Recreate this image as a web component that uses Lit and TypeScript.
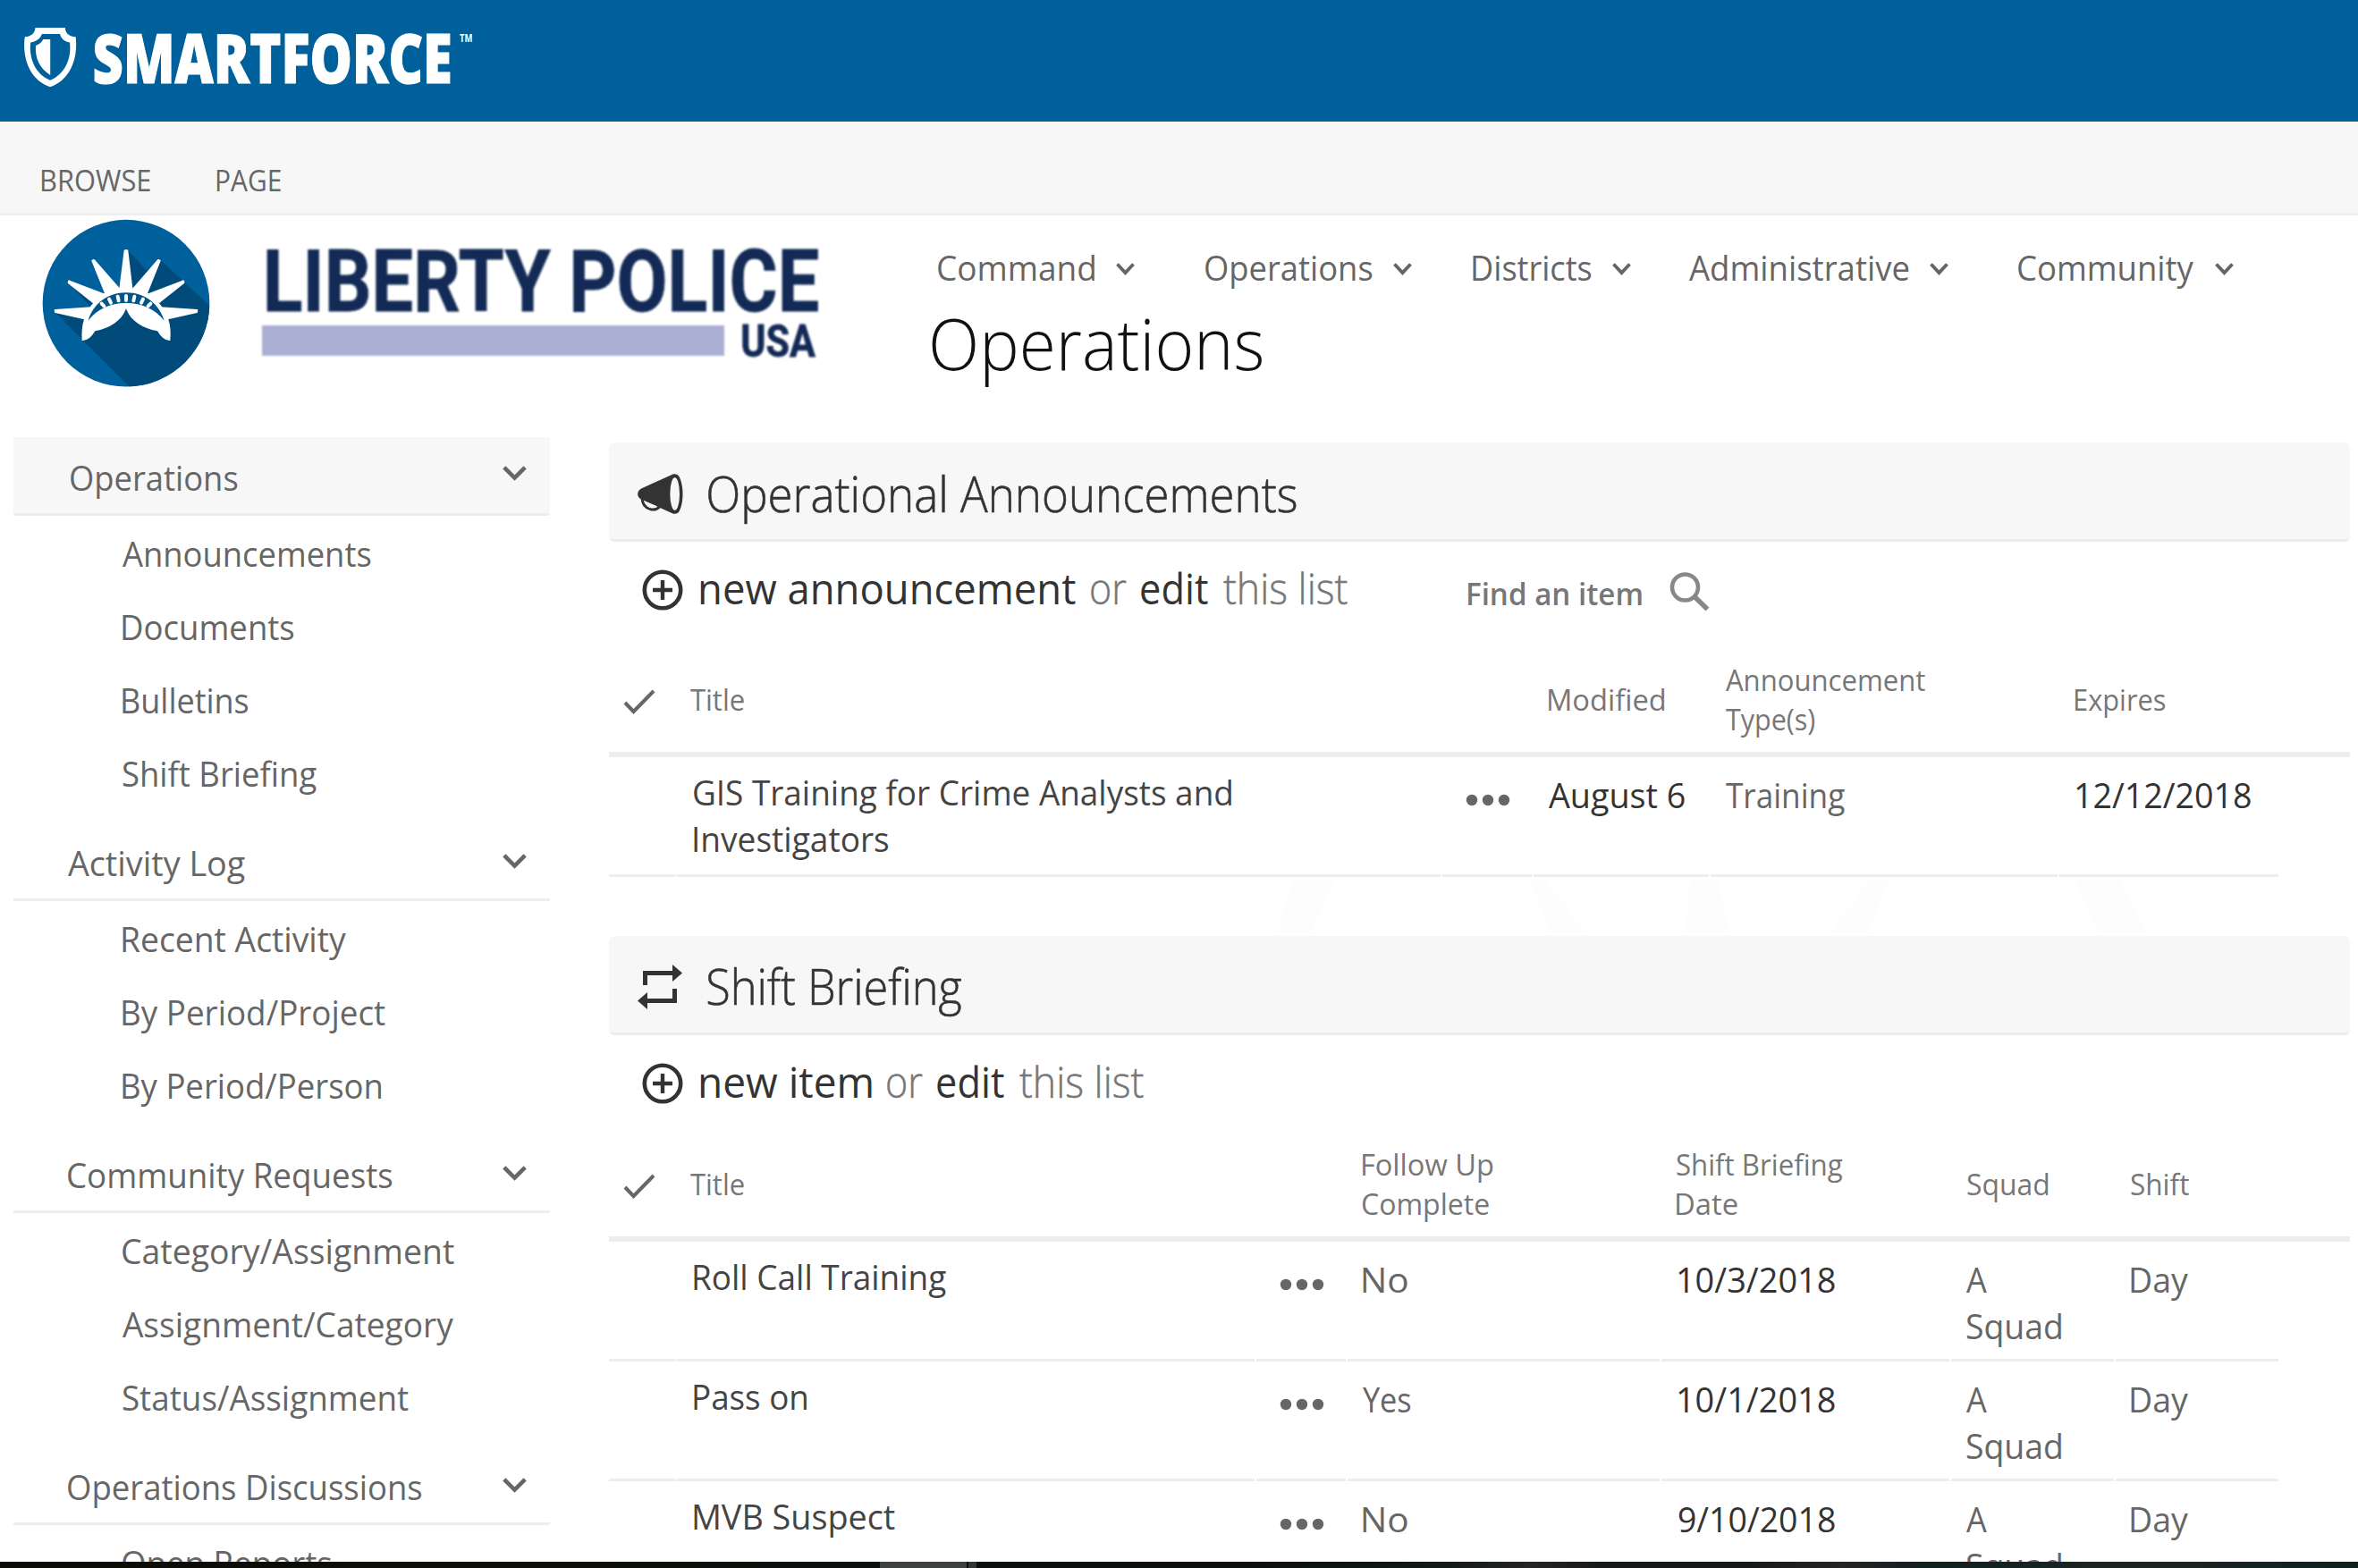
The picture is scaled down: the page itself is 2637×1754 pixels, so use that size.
import { LitElement, html, css, svg, nothing } from "lit";
import { customElement, property } from "lit/decorators.js";

/**
 * One line of text whose inked width is set exactly to `w` pixels,
 * starting at the element's left edge.
 */
@customElement("fit-text")
class FitText extends LitElement {
  @property({ type: Number }) w = 100;
  @property() text = "";

  static styles = css`
    :host { display: block; flex: none; height: 1lh; white-space: nowrap; }
    .ink { display: inline-block; transform-origin: 0 0; white-space: pre; }
  `;

  render() {
    return html`<span class="ink">${this.text}</span>`;
  }

  updated() {
    const ink = this.renderRoot.querySelector(".ink") as HTMLElement;
    const cs = getComputedStyle(this);
    const ctx = document.createElement("canvas").getContext("2d")!;
    ctx.font = `${cs.fontWeight} ${cs.fontSize} ${cs.fontFamily}`;
    const m = ctx.measureText(this.text);
    const natural = m.actualBoundingBoxLeft + m.actualBoundingBoxRight;
    if (natural <= 0) return;
    // Anti-aliased edges add about half a pixel on each side.
    const k = (this.w - 1.2) / natural;
    this.style.width = `${this.w}px`;
    ink.style.transform = `translateX(${m.actualBoundingBoxLeft * k + 0.9}px) scaleX(${k})`;
  }
}

type Line = [text: string, width: number];
const fit = ([text, w]: Line) => html`<fit-text .text=${text} .w=${w}></fit-text>`;

const chevron = (w: number, h: number, s: number) => html`
  <svg class="chev" width=${w} height=${h} viewBox="0 0 ${w} ${h}">
    <path d="M${s * 0.4} ${s * 0.4}L${w / 2} ${h - s * 0.75}L${w - s * 0.4} ${s * 0.4}"
      fill="none" stroke="#666" stroke-width=${s} />
  </svg>`;

const NAV: { label: Line; gap: number; chev: number }[] = [
  { label: ["Command", 176], gap: 0, chev: 24 },
  { label: ["Operations", 188], gap: 78, chev: 23 },
  { label: ["Districts", 134], gap: 67, chev: 23 },
  { label: ["Administrative", 247], gap: 64, chev: 23 },
  { label: ["Community", 198], gap: 77, chev: 23 },
];

const SIDE: { head: Line; items: Line[]; active?: boolean }[] = [
  {
    head: ["Operations", 188],
    active: true,
    items: [["Announcements", 279], ["Documents", 193], ["Bulletins", 142], ["Shift Briefing", 218]],
  },
  {
    head: ["Activity Log", 199],
    items: [["Recent Activity", 252], ["By Period/Project", 295], ["By Period/Person", 291]],
  },
  {
    head: ["Community Requests", 364],
    items: [["Category/Assignment", 372], ["Assignment/Category", 372], ["Status/Assignment", 321]],
  },
  { head: ["Operations Discussions", 397], items: [["Open Reports", 235]] },
];

const megaphone = svg`
  <svg width="52" height="46" viewBox="38 43 156 138">
    <path d="M158 44Q170 42 176 50C194 80 194 142 176 172Q170 179 158 177L52 129C34 122 34 100 52 92Z" fill="#333"/>
    <ellipse cx="163" cy="110.500" rx="16" ry="55" fill="#f7f7f7"/>
    <path d="M53 124C55 168 104 172 114 150" fill="none" stroke="#333" stroke-width="9"/>
    <path d="M64 137Q72 154 88 153Q97 153 100 150Z" fill="#f7f7f7"/>
  </svg>`;

const repeat = svg`
  <svg width="52" height="50" viewBox="0 0 52 50">
    <g fill="#333">
      <path d="M6 7H39V0L50 9.500L39 19V12H11V23H6Z"/>
      <path d="M44 27V43H11V50L0 40.500L11 31V38H39V27Z"/>
    </g>
  </svg>`;

const plus = svg`
  <svg class="plus" width="46" height="46" viewBox="0 0 46 46">
    <circle cx="23" cy="23" r="20.200" fill="none" stroke="#333" stroke-width="4.600"/>
    <path d="M23 12V34M12 23H34" stroke="#333" stroke-width="4.400"/>
  </svg>`;

const search = svg`
  <svg class="search" width="46" height="46" viewBox="0 0 46 46">
    <circle cx="17.500" cy="17" r="14.500" fill="none" stroke="#888" stroke-width="4.600"/>
    <path d="M27.500 27L42.500 41.500" stroke="#888" stroke-width="5.500"/>
  </svg>`;

const check = svg`
  <svg class="tick" width="37" height="29" viewBox="0 0 37 29">
    <path d="M2 15L11.500 25L34 2" fill="none" stroke="#666" stroke-width="4"/>
  </svg>`;

const dots = svg`
  <svg width="50" height="14" viewBox="0 0 50 14">
    <circle cx="7" cy="7" r="6.200" fill="#666"/><circle cx="25" cy="7" r="6.200" fill="#666"/><circle cx="43" cy="7" r="6.200" fill="#666"/>
  </svg>`;

const shield = svg`
  <svg class="shield" width="60" height="68" viewBox="26 30 60 68">
    <path fill="#fff" fill-rule="evenodd" d="M39.500 31H72.800C73.200 37 77.500 41.300 84.700 41.300C87.500 66 78 90 56 97.200C34 90 24.500 66 27.700 41.300C34.500 41.300 39 37 39.500 31ZM47 38C45 43 41 46.500 34.200 47.500C32 67 41 84 56 89.700C71 84 80.500 67 78 47.500C71.500 46.500 68.500 43 67 38Z"/>
    <path fill="#fff" d="M48.200 44H56.200V84C44 76 39 65 40 51Q46 49 48.200 44Z"/>
  </svg>`;

const crown = svg`
  <svg class="crown" width="188" height="188" viewBox="142 44 564 564">
    <defs><clipPath id="disc"><circle cx="424" cy="326.500" r="280"/></clipPath></defs>
    <circle cx="424" cy="326.500" r="280" fill="#00609c"/>
    <g clip-path="url(#disc)" fill="#004b7a">
      <path d="M185 356L436 608H720V350L540 182L492 216L431 150H424L400 275L313 182L352 297L320 328L230 256L310 345Z"/>
    </g>
    <g fill="#fff" stroke="#fff" stroke-width="6" stroke-linejoin="round">
      <path d="M420 150H428L444 285H403Z"/>
      <path d="M316 182L400 278L356 296L311 184ZM532 182L449 278L492 296L537 184Z"/>
      <path d="M232 252L354 299L317 326L231 258ZM616 252L494 299L531 326L617 258Z"/>
      <path d="M186 350L310 342L284 378L187 356ZM662 350L538 342L564 378L661 356Z"/>
    </g>
    <path fill="#fff" d="M283 381C300 330 345 274 424 274C503 274 548 330 566 381Q576 412 572 452Q549 454 529 420C480 412 438 385 424 345C410 385 368 412 320 420Q300 454 276 452Q273 412 283 381Z"/>
    <path fill="#00558a" d="M297 385C312 330 362 291 424 291C488 291 536 330 552 385C520 346 478 326 424 326C370 326 328 346 297 385Z"/>
    <path stroke="#fff" stroke-width="12" stroke-linecap="round" fill="none"
      d="M424 302V317M396 304L399 318M452 304L449 318M367 313L373 325M481 313L475 325M342 328L350 336M506 328L498 336"/>
  </svg>`;

interface Cell { lines?: Line[]; kind?: "title" | "dark" | "dots" | "check"; }
const t = (...lines: Line[]): Cell => ({ lines });
const title = (...lines: Line[]): Cell => ({ lines, kind: "title" });
const dark = (...lines: Line[]): Cell => ({ lines, kind: "dark" });
const DOTS: Cell = { kind: "dots" };

@customElement("list-part")
class ListPart extends LitElement {
  @property() icon: "megaphone" | "repeat" = "megaphone";
  @property({ attribute: false }) heading: Line = ["", 1];
  @property({ attribute: false }) create: Line = ["", 1];
  @property({ type: Boolean }) searchable = false;
  @property({ attribute: false }) head: Cell[] = [];
  @property({ attribute: false }) rows: Cell[][] = [];
  @property({ reflect: true }) variant = "announce";

  static styles = css`
    :host { display: block; width: 1947px; }
    svg { display: block; flex: none; }
    .bar { box-sizing: border-box; height: 111px; display: flex; padding: 34px 0 0 32px; gap: 26px;
      background: #f7f7f7; border-bottom: 3px solid #ededed; border-radius: 6px; }
    .bar svg { margin-top: 1px; }
    .bar.repeat svg { margin-top: -2px; }
    .bar fit-text { font-size: 56px; line-height: 60px; color: #333; font-weight: 300; margin-top: -8px;
      -webkit-text-stroke: 0.6px #333; }
    .bar.repeat fit-text { margin-top: -9px; }
    .tools { height: 119px; display: flex; box-sizing: border-box; padding: 31px 0 0 37px; font-size: 47px;
      line-height: 60px; color: #333; }
    :host([variant="shift"]) .tools { height: 109px; }
    :host([variant="shift"]) .plus { margin-top: -0.5px; }
    .plus { margin-right: 19px; }
    .tools fit-text { margin-top: -9px; }
    .light { color: #777; font-weight: 300; -webkit-text-stroke: 0.5px #777; }
    .a { margin-left: 15.500px; }
    .tools .find { font-size: 34px; font-weight: 600; color: #777; margin: -3px 31px 0 134px; }
    .search { margin-top: 3px; }
    .grid { display: grid; width: 1869px; grid-template-columns: 76px 856px 102px 198px 390px 247px; }
    :host([variant="shift"]) .grid { grid-template-columns: 76px 648px 102px 351px 324px 184px 184px; }
    .headrow { height: 116px; border-bottom: 6px solid #ededed; display: flex; align-items: center; }
    .headrow .grid { align-items: center; }
    .headrow .cell { font-size: 33px; line-height: 44px; color: #777; }
    .cell { padding-left: 16px; }
    .headrow .c5 { padding-left: 17px; }
    .headrow .title { padding-left: 14px; }
    .tick { margin-top: 5px; }
    .row { font-size: 38px; line-height: 52px; color: #666; }
    .row .cell { border-bottom: 3px solid #ededed; height: 131px; margin-right: 2px; }
    .row .inner { padding-top: 16px; }
    .row .title .inner { padding-top: 13px; }
    .row .title { padding-left: 17.500px; color: #444; }
    .row .dark { color: #333; padding-left: 17.500px; }
    .row .cell.first { margin-right: 1px; }
    .row .dots { padding-left: 26px; }
    .row .dots .inner { padding-top: 41px; }
    .announce .row .c3 { padding-left: 16px; }
  `;

  private cell(c: Cell, i: number) {
    return html`<div class="cell ${c.kind ?? ""} c${i} ${i === 0 ? "first" : ""}">
      <div class="inner">
        ${c.kind === "dots" ? dots : c.kind === "check" ? check : nothing}
        ${c.lines?.map(fit) ?? nothing}
      </div>
    </div>`;
  }

  render() {
    return html`
      <div class="bar ${this.icon}">
        ${this.icon === "megaphone" ? megaphone : repeat}${fit(this.heading)}
      </div>
      <div class="tools">
        ${plus}${fit(this.create)}
        <fit-text class="light a" .text=${"or"} .w=${41}></fit-text>
        <fit-text class="a" .text=${"edit"} .w=${76}></fit-text>
        <fit-text class="light a" .text=${"this list"} .w=${140}></fit-text>
        ${this.searchable
          ? html`<fit-text class="find" .text=${"Find an item"} .w=${195}></fit-text>${search}`
          : nothing}
      </div>
      <div class=${this.variant}>
        <div class="headrow"><div class="grid">${this.head.map((c, i) => this.cell(c, i))}</div></div>
        ${this.rows.map((r) => html`<div class="grid row">${r.map((c, i) => this.cell(c, i))}</div>`)}
      </div>
    `;
  }
}

@customElement("app-root")
class AppRoot extends LitElement {
  static styles = css`
    :host { display: flex; flex-direction: column; width: 2637px; height: 1754px; overflow: hidden;
      background: #fff; color: #666; font-family: "Open Sans", "Noto Sans", sans-serif; font-size: 38px; }
    svg { display: block; flex: none; }
    .top { flex: none; height: 136px; background: #00609c; display: flex; padding-left: 26px; color: #fff; }
    .shield { margin-top: 30px; }
    .brand { margin: 15px 0 0 19px; font-size: 76px; line-height: 97px; font-weight: 800;
      -webkit-text-stroke: 1.2px #fff; }
    .tm { margin: 32px 0 0 9px; font-size: 12.5px; line-height: 22px; font-weight: 700; }
    .ribbon { flex: none; box-sizing: border-box; height: 105px; background: #f7f7f7; border-bottom: 3px solid #efefef;
      display: flex; padding: 46px 0 0 46px; gap: 74px; font-size: 32px; line-height: 40px; }
    .mast { flex: none; height: 248px; display: flex; }
    .crown { margin: 4px 0 0 47px; }
    .logo { margin: 0 0 0 40px; padding: 36px 0 0 18px; width: 640px; box-sizing: border-box; filter: blur(0.8px);
      font-family: Roboto, "Open Sans", sans-serif; font-weight: 700; color: #122a55; -webkit-text-stroke: 0.8px #122a55; }
    .police { font-size: 95.6px; line-height: 76px; margin-left: 5px; }
    .under { display: flex; margin-top: 11px; gap: 19px; }
    .stripe { width: 517px; height: 34px; background: #abafd3; }
    .usa { font-size: 50.6px; line-height: 34px; margin-top: 0.5px; }
    .headcol { margin-left: 126px; display: flex; flex-direction: column; }
    .nav { display: flex; padding: 32px 0 0 7px; line-height: 52px; }
    .navitem { display: flex; }
    .navitem .chev { margin-top: 21px; }
    .h1 { font-size: 79px; line-height: 90px; font-weight: 300; color: #111; margin-top: 13.500px; }
    .body { flex: 1; min-height: 0; overflow: hidden; display: flex; }
    .side { width: 600px; margin: 0 66px 0 15px; line-height: 52px; }
    .ghead { box-sizing: border-box; height: 88px; border-bottom: 3px solid #ededed; margin-top: 15px; display: flex;
      justify-content: space-between; padding: 19px 26px 0 60px; }
    .ghead.active { margin-top: 0; background: #f7f7f7; border-radius: 3px; padding-left: 63px; }
    .ghead .chev { margin-top: 15.500px; }
    .ghead.active .chev { margin-top: 12.500px; }
    .item { height: 82px; box-sizing: border-box; padding: 16px 0 0 121px; }
    .main { padding-top: 6px; }
    .mark { display: block; height: 66px; }
    .taskbar { flex: none; height: 7px; display: flex;
      background: linear-gradient(90deg, #0c0c06 0, #0a0e0a 900px, #0a1010 1400px, #101a18 1620px, #262424 1710px, #161a16 1790px, #161a16 1960px, #262424 2060px, #121e20 2150px, #1c2624 2400px, #121e20 2637px); }
    .task { margin-left: 984px; width: 97px; background: #3c4240; }
    .task2 { margin-left: 2px; width: 9px; background: #303634; }
  `;

  render() {
    return html`
      <div class="top">
        ${shield}
        <fit-text class="brand" .text=${"SMARTFORCE"} .w=${399}></fit-text>
        <fit-text class="tm" .text=${"TM"} .w=${15}></fit-text>
      </div>
      <div class="ribbon">${fit(["BROWSE", 122])}${fit(["PAGE", 72])}</div>
      <div class="mast">
        ${crown}
        <div class="logo">
          <fit-text class="police" .text=${"LIBERTY POLICE"} .w=${617}></fit-text>
          <div class="under"><div class="stripe"></div><fit-text class="usa" .text=${"USA"} .w=${83}></fit-text></div>
        </div>
        <div class="headcol">
          <div class="nav">
            ${NAV.map((n) => html`<div class="navitem" style="margin-left:${n.gap}px;gap:${n.chev}px">
              ${fit(n.label)}${chevron(21, 14, 3.8)}</div>`)}
          </div>
          <fit-text class="h1" .text=${"Operations"} .w=${371}></fit-text>
        </div>
      </div>
      <div class="body">
        <div class="side">
          ${SIDE.map((g) => html`
            <div class="ghead ${g.active ? "active" : ""}">${fit(g.head)}${chevron(27, 17, 4.6)}</div>
            ${g.items.map((i) => html`<div class="item">${fit(i)}</div>`)}`)}
        </div>
        <div class="main">
          <list-part icon="megaphone" variant="announce" searchable
            .heading=${["Operational Announcements", 659] as Line}
            .create=${["new announcement", 420] as Line}
            .head=${[{ kind: "check" }, title(["Title", 61]), {}, t(["Modified", 131]),
              t(["Announcement", 224], ["Type(s)", 101]), t(["Expires", 102])] as Cell[]}
            .rows=${[[{}, title(["GIS Training for Crime Analysts and", 602], ["Investigators", 219]), DOTS,
              dark(["August 6", 153]), t(["Training", 134]), dark(["12/12/2018", 196])]] as Cell[][]}></list-part>
          <svg class="mark" width="1946" height="66" viewBox="0 0 1946 66">
            <g fill="#fdfdfd">
              <path d="M765 3H812L785 62H748ZM1030 3H1048L1092 62H1052ZM1210 3H1240L1254 62H1203ZM1410 3H1432L1408 62H1366ZM1640 3H1690L1720 62H1665Z"/>
            </g>
          </svg>
          <list-part icon="repeat" variant="shift"
            .heading=${["Shift Briefing", 285] as Line}
            .create=${["new item", 192] as Line}
            .head=${[{ kind: "check" }, title(["Title", 61]), {}, t(["Follow Up", 147], ["Complete", 142]),
              t(["Shift Briefing", 187], ["Date", 69]), t(["Squad", 92]), t(["Shift", 66])] as Cell[]}
            .rows=${[
              [{}, title(["Roll Call Training", 283]), DOTS, t(["No", 51]), dark(["10/3/2018", 176]),
                t(["A", 24], ["Squad", 107]), t(["Day", 66])],
              [{}, title(["Pass on", 128]), DOTS, t(["Yes", 55]), dark(["10/1/2018", 176]),
                t(["A", 24], ["Squad", 107]), t(["Day", 66])],
              [{}, title(["MVB Suspect", 226]), DOTS, t(["No", 51]), dark(["9/10/2018", 176]),
                t(["A", 24], ["Squad", 107]), t(["Day", 66])],
            ] as Cell[][]}></list-part>
        </div>
      </div>
      <div class="taskbar"><div class="task"></div><div class="task2"></div></div>
    `;
  }
}
